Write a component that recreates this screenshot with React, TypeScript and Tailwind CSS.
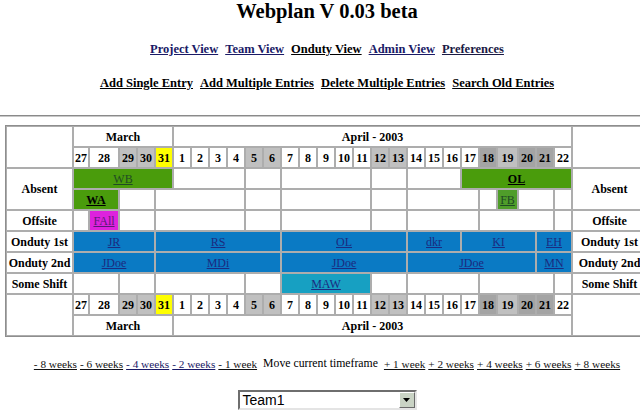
import React from 'react';

interface Seg {
  span: number;
  bg?: string;
  text?: string;
  tone?: 'green' | 'bold' | 'blue' | 'pink';
}

const SPAN: Record<number, string> = {
  1: 'col-span-1',
  2: 'col-span-2',
  3: 'col-span-3',
  4: 'col-span-4',
  5: 'col-span-5',
  6: 'col-span-6',
  7: 'col-span-7',
};

const TONE = {
  green: 'font-normal text-[#1f4a24] underline',
  bold: 'font-bold text-black underline',
  blue: 'font-normal text-[#1b2b80] underline',
  pink: 'font-normal text-[#5a1a76] underline',
};

const GREEN = 'bg-[#4a9c0c]';
const BLUE = 'bg-[#0a7ac4]';
const WEEKEND = 'bg-[#c0c0c0]';
const HOLIDAY = 'bg-[#a4a4a4]';

const DAYS: [string, string][] = [
  ['27', 'bg-white'],
  ['28', 'bg-white'],
  ['29', WEEKEND],
  ['30', WEEKEND],
  ['31', 'bg-[#ffff00]'],
  ['1', 'bg-white'],
  ['2', 'bg-white'],
  ['3', 'bg-white'],
  ['4', 'bg-white'],
  ['5', WEEKEND],
  ['6', WEEKEND],
  ['7', 'bg-white'],
  ['8', 'bg-white'],
  ['9', 'bg-white'],
  ['10', 'bg-white'],
  ['11', 'bg-white'],
  ['12', WEEKEND],
  ['13', WEEKEND],
  ['14', 'bg-white'],
  ['15', 'bg-white'],
  ['16', 'bg-white'],
  ['17', 'bg-white'],
  ['18', HOLIDAY],
  ['19', WEEKEND],
  ['20', HOLIDAY],
  ['21', HOLIDAY],
  ['22', 'bg-white'],
];

const absent1: Seg[] = [
  { span: 5, bg: GREEN, text: 'WB', tone: 'green' },
  { span: 4 },
  { span: 2 },
  { span: 5 },
  { span: 2 },
  { span: 3 },
  { span: 6, bg: GREEN, text: 'OL', tone: 'bold' },
];

const absent2: Seg[] = [
  { span: 2, bg: GREEN, text: 'WA', tone: 'bold' },
  { span: 2 },
  { span: 5 },
  { span: 2 },
  { span: 5 },
  { span: 2 },
  { span: 4 },
  { span: 1 },
  { span: 1, bg: 'bg-[#4f9d2a]', text: 'FB', tone: 'green' },
  { span: 2 },
  { span: 1 },
];

const offsite: Seg[] = [
  { span: 1 },
  { span: 1, bg: 'bg-[#dd22dd]', text: 'FAll', tone: 'pink' },
  { span: 2 },
  { span: 5 },
  { span: 2 },
  { span: 5 },
  { span: 2 },
  { span: 4 },
  { span: 4 },
  { span: 1 },
];

const onduty1: Seg[] = [
  { span: 4, bg: BLUE, text: 'JR', tone: 'blue' },
  { span: 7, bg: BLUE, text: 'RS', tone: 'blue' },
  { span: 7, bg: BLUE, text: 'OL', tone: 'blue' },
  { span: 3, bg: BLUE, text: 'dkr', tone: 'blue' },
  { span: 4, bg: BLUE, text: 'KI', tone: 'blue' },
  { span: 2, bg: BLUE, text: 'EH', tone: 'blue' },
];

const onduty2: Seg[] = [
  { span: 4, bg: BLUE, text: 'JDoe', tone: 'blue' },
  { span: 7, bg: BLUE, text: 'MDi', tone: 'blue' },
  { span: 7, bg: BLUE, text: 'JDoe', tone: 'blue' },
  { span: 7, bg: BLUE, text: 'JDoe', tone: 'blue' },
  { span: 2, bg: BLUE, text: 'MN', tone: 'blue' },
];

const shift: Seg[] = [
  { span: 2 },
  { span: 2 },
  { span: 5 },
  { span: 2 },
  { span: 5, bg: 'bg-[#17a0c2]', text: 'MAW', tone: 'blue' },
  { span: 2 },
  { span: 4 },
  { span: 4 },
  { span: 1 },
];

function Segments({ segs }: { segs: Seg[] }) {
  return (
    <>
      {segs.map((s, i) => (
        <div
          key={i}
          className={`${SPAN[s.span]} ${s.bg ?? 'bg-white'} flex items-center justify-center text-[12px] leading-none`}
        >
          {s.text && <a className={TONE[s.tone ?? 'blue']}>{s.text}</a>}
        </div>
      ))}
    </>
  );
}

function Label({ text, tall }: { text?: string; tall?: boolean }) {
  return (
    <div
      className={`${tall ? 'row-span-2' : ''} flex items-center justify-center whitespace-nowrap bg-white text-[12px] font-bold leading-none`}
    >
      {text}
    </div>
  );
}

function DayRow() {
  return (
    <>
      {DAYS.map(([d, bg]) => (
        <div key={d} className={`${bg} flex items-center justify-center text-[12px] font-bold leading-none`}>
          {d}
        </div>
      ))}
    </>
  );
}

function Months() {
  return (
    <>
      <div className="col-span-5 flex items-center justify-center bg-white text-[12px] font-bold leading-none">
        March
      </div>
      <div className="col-span-22 flex items-center justify-center bg-white text-[12px] font-bold leading-none">
        April - 2003
      </div>
    </>
  );
}

const views = [
  { name: 'Project View', color: 'text-[#1a1a66]' },
  { name: 'Team View', color: 'text-[#1a1a66]' },
  { name: 'Onduty View', color: 'text-black' },
  { name: 'Admin View', color: 'text-[#1a1a66]' },
  { name: 'Preferences', color: 'text-[#1a1a44]' },
];

const actions = ['Add Single Entry', 'Add Multiple Entries', 'Delete Multiple Entries', 'Search Old Entries'];

const back = [
  { t: '- 8 weeks', c: 'text-[#111111]' },
  { t: '- 6 weeks', c: 'text-[#111111]' },
  { t: '- 4 weeks', c: 'text-[#1a1a66]' },
  { t: '- 2 weeks', c: 'text-[#1a1a66]' },
  { t: '- 1 week', c: 'text-[#111111]' },
];
const fwd = ['+ 1 week', '+ 2 weeks', '+ 4 weeks', '+ 6 weeks', '+ 8 weeks'];

export default function App() {
  return (
    <div className="h-[414px] w-[640px] overflow-hidden bg-white">
      <div className="w-[654px] font-['Liberation_Serif',serif] text-black">
        <h1 className="text-center text-[20.5px] font-bold leading-[22px]">Webplan V 0.03 beta</h1>

        <nav className="mt-[19px] flex justify-center gap-[7px] text-[12.5px] font-bold leading-[16px]">
          {views.map((v) => (
            <a key={v.name} className={`${v.color} underline`}>
              {v.name}
            </a>
          ))}
        </nav>

        <nav className="mt-[18px] flex justify-center gap-[7px] text-[12.5px] font-bold leading-[16px]">
          {actions.map((a) => (
            <a key={a} className="text-black underline">
              {a}
            </a>
          ))}
        </nav>

        <div className="mt-[24px] h-[2px] border-t border-b border-t-[#8a8a8a] border-b-[#c8c8c8]" />

        <div className="ml-[5px] mt-[8px] grid w-[643px] grid-cols-[65px_14px_28px_16px_16px_16px_repeat(18,16px)_19px_16px_16px_16px_73px] grid-rows-[repeat(10,19px)] gap-[2px] border border-[#8e8e8e] bg-[#adadad] p-px">
          <Label tall />
          <Months />
          <Label tall />
          <DayRow />

          <Label text="Absent" tall />
          <Segments segs={absent1} />
          <Label text="Absent" tall />
          <Segments segs={absent2} />

          <Label text="Offsite" />
          <Segments segs={offsite} />
          <Label text="Offsite" />

          <Label text="Onduty 1st" />
          <Segments segs={onduty1} />
          <Label text="Onduty 1st" />

          <Label text="Onduty 2nd" />
          <Segments segs={onduty2} />
          <Label text="Onduty 2nd" />

          <Label text="Some Shift" />
          <Segments segs={shift} />
          <Label text="Some Shift" />

          <Label tall />
          <DayRow />
          <Label tall />
          <Months />
        </div>

        <div className="mt-[20px] flex justify-center gap-[3px] text-[11.25px] leading-[14px]">
          {back.map((b) => (
            <a key={b.t} className={`${b.c} underline`}>
              {b.t}
            </a>
          ))}
          <span className="mx-[3px] text-[11.75px]">Move current timeframe</span>
          {fwd.map((f) => (
            <a key={f} className="text-[#111111] underline">
              {f}
            </a>
          ))}
        </div>

        <div className="mx-auto mt-[19px] flex h-[20px] w-[179px] border-2 border-t-[#6e6e6e] border-l-[#6e6e6e] border-b-[#e4e4e4] border-r-[#e4e4e4] bg-white">
          <span className="flex-1 pl-[3px] font-['Liberation_Sans',sans-serif] text-[14px] leading-[16px]">Team1</span>
          <span className="flex h-[16px] w-[16px] items-center justify-center border border-t-white border-l-white border-b-[#6a6a6a] border-r-[#6a6a6a] bg-[#c9d3c4]">
            <svg width="7" height="4" viewBox="0 0 7 4">
              <path d="M0 0h7L3.5 4z" fill="#000" />
            </svg>
          </span>
        </div>
      </div>
    </div>
  );
}
